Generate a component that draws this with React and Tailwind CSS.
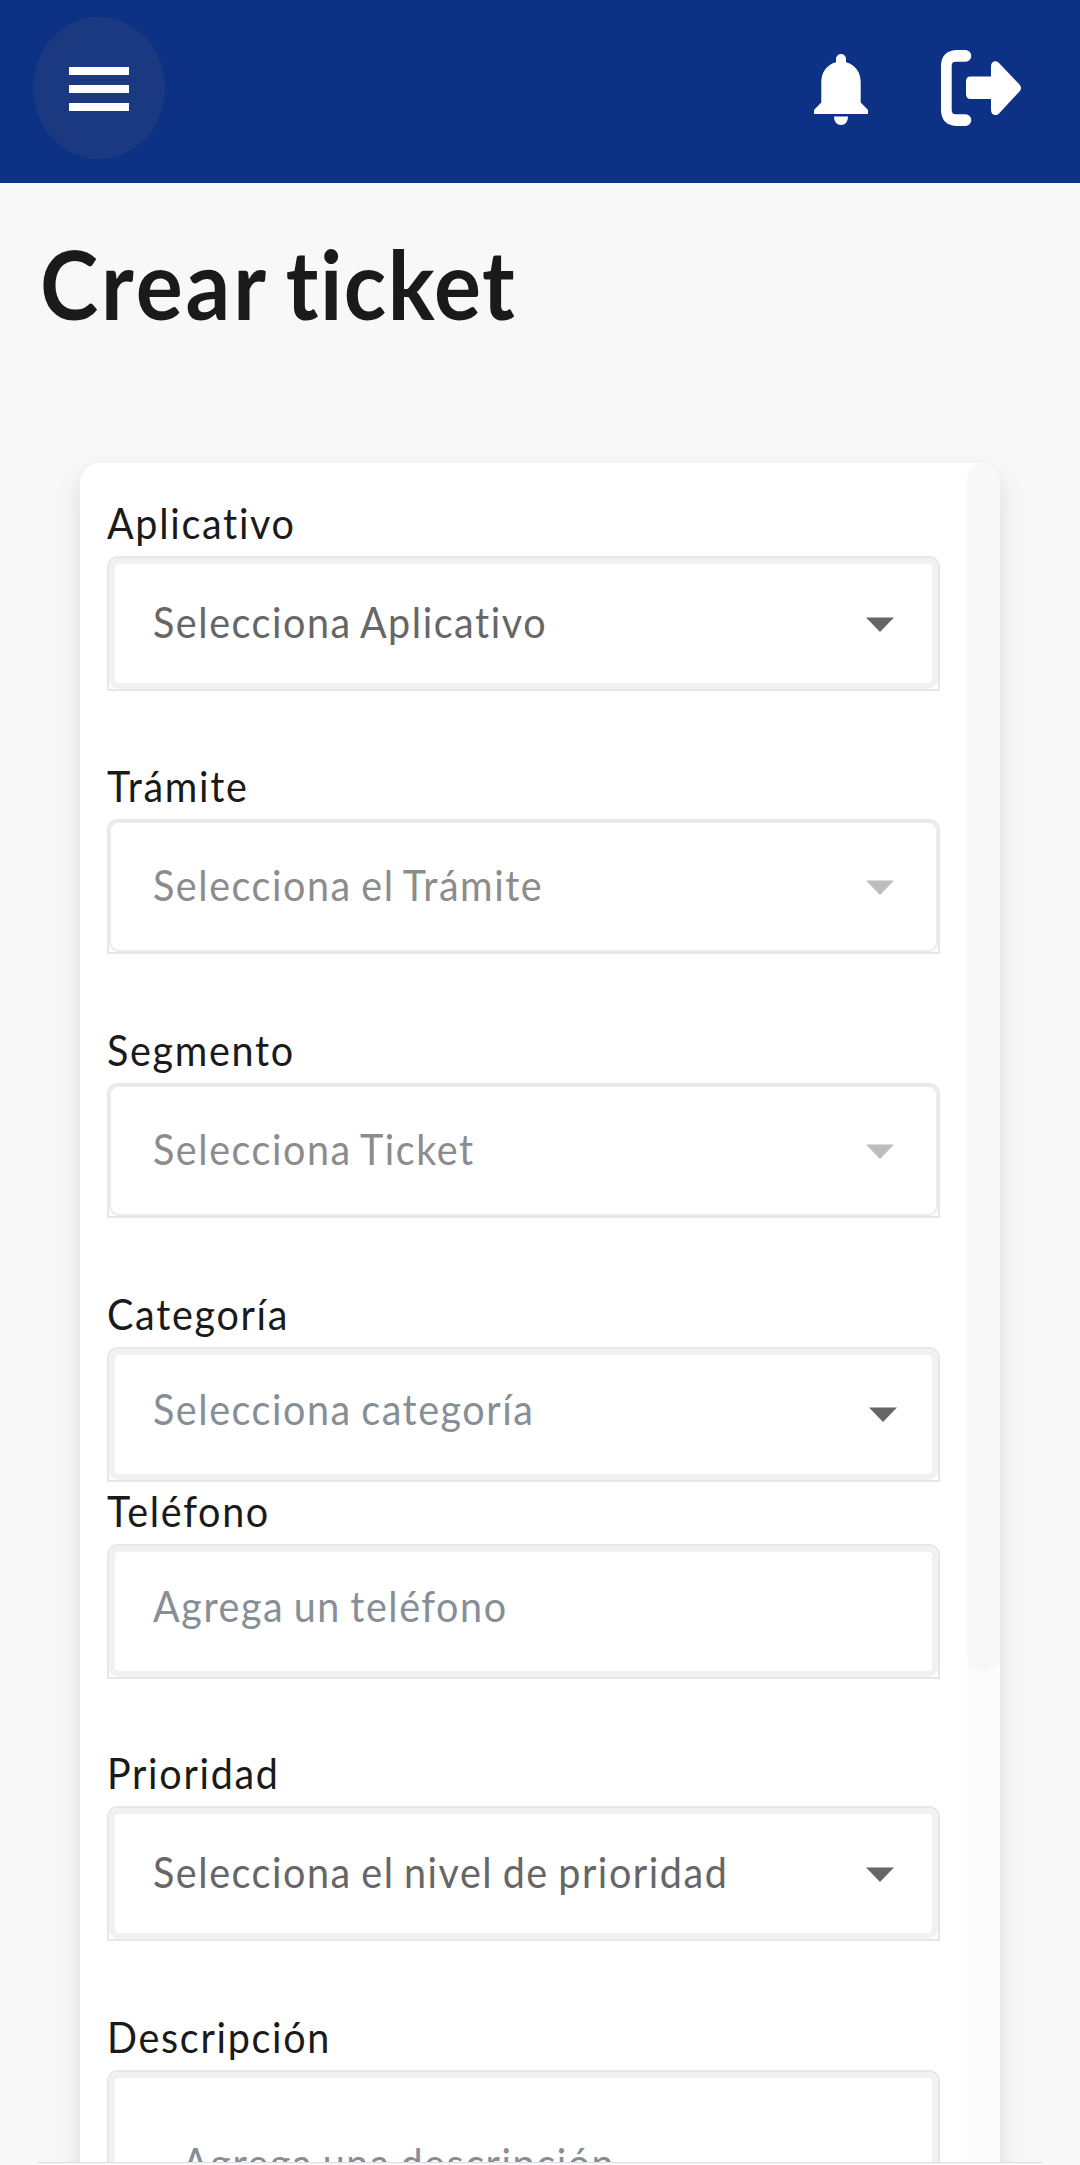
import React from 'react';

const fields = [
  { label: 'Aplicativo', value: 'Selecciona Aplicativo', kind: 'select', gap: '' },
  { label: 'Trámite', value: 'Selecciona el Trámite', kind: 'disabled', gap: 'mt-[61px]' },
  { label: 'Segmento', value: 'Selecciona Ticket', kind: 'disabled', gap: 'mt-[62px]' },
  { label: 'Categoría', value: 'Selecciona categoría', kind: 'combo', gap: 'mt-[62px]' },
  { label: 'Teléfono', value: 'Agrega un teléfono', kind: 'input', gap: '-mt-[5px]' },
  { label: 'Prioridad', value: 'Selecciona el nivel de prioridad', kind: 'select', gap: 'mt-[60px]' },
  { label: 'Descripción', value: 'Agrega una descripción', kind: 'textarea', gap: 'mt-[62px]' },
];

const styles = {
  select: {
    box: 'h-[131px] pl-[44px] pr-[44px] shadow-[inset_0_0_0_6px_#f1f1f1]',
    text: 'pb-[3px] text-[#666666]',
    arrow: 'text-[#666666] mt-[2px]',
  },
  disabled: {
    box: 'h-[131px] pl-[44px] pr-[44px] shadow-[inset_0_0_0_2px_#ebebeb]',
    text: 'pb-[3px] text-[#8c8c8c]',
    arrow: 'text-[#bdbdbd] mt-[2px]',
  },
  combo: {
    box: 'h-[131px] pl-[44px] pr-[41px] shadow-[inset_0_0_0_6px_#f1f1f1]',
    text: 'pb-[11px] text-[#868e96]',
    arrow: 'text-[#666666]',
  },
  input: {
    box: 'h-[131px] pl-[44px] shadow-[inset_0_0_0_6px_#f1f1f1]',
    text: 'pb-[11px] text-[#868e96]',
  },
  textarea: {
    box: 'h-[320px] pl-[73px] shadow-[inset_0_0_0_6px_#f1f1f1]',
    text: 'self-start mt-[64px] text-[#868e96]',
  },
};

function Field({ label, value, kind, gap }) {
  const s = styles[kind];
  return (
    <div className={gap}>
      <label className="flex h-[67px] origin-center scale-y-[1.09] items-center text-[39.5px] leading-[54px] tracking-[1.7px] text-[#1a1a1a]">
        {label}
      </label>
      <div className="rounded-t-[11px] border-2 border-[#e6e7e8]">
        <div className={`flex items-center justify-between rounded-[10px] ${s.box}`}>
          <span className={`whitespace-nowrap ${s.text}`}>
            <span className="block origin-center scale-y-[1.09] text-[39.5px] leading-[54px] tracking-[1.55px] [word-spacing:-2.2px]">
              {value}
            </span>
          </span>
          {s.arrow && (
            <svg className={`h-[15px] w-[28px] ${s.arrow}`} viewBox="0 0 28 15">
              <path d="M0 0.5H28L14 15Z" fill="currentColor" />
            </svg>
          )}
        </div>
      </div>
    </div>
  );
}

function Bell() {
  return (
    <svg className="h-[71px] w-[54px]" viewBox="0 0 54 71" fill="white">
      <path d="M22 8.2V5a5 5 0 0 1 10 0V8.2C41 10.5 46.7 18 46.7 28V48.5L54 56V60H0V56L7.3 48.5V28C7.3 18 13 10.5 22 8.2Z" />
      <path d="M20 62.5H34C34 67.5 31 71 27 71S20 67.5 20 62.5Z" />
    </svg>
  );
}

function Logout() {
  return (
    <svg className="h-[76px] w-[80px]" viewBox="0 0 80 76" fill="none">
      <path d="M15 0H24.5a5.8 5.9 0 0 1 0 11.8H14.5Q10.7 11.8 10.7 16V60Q10.7 64.2 14.5 64.2H24.5a5.8 5.9 0 0 1 0 11.8H15Q0 75 0 59.5V16.5Q0 1 15 0Z" fill="white" />
      <path d="M29.5 26.5H50V16C50 11.5 55 9.8 58 13L78.5 34.5Q81.5 38 78.5 41.5L58 63.5C55 66.5 50 65 50 60V49H29.5Q25 49 25 44V31.5Q25 26.5 29.5 26.5Z" fill="white" />
    </svg>
  );
}

export default function App() {
  return (
    <div className="flex h-[2165px] w-[1080px] flex-col overflow-hidden bg-[#f8f8f8] font-['Lato','Carlito',sans-serif]">
      <header className="flex h-[183px] shrink-0 items-start bg-[#0d3184]">
        <button className="ml-[33px] mt-[17px] flex h-[142px] w-[132px] flex-col items-center justify-center gap-[10px] rounded-[50%] bg-[#1a3980] pt-[1px]">
          <span className="h-[8px] w-[60px] bg-white" />
          <span className="h-[8px] w-[60px] bg-white" />
          <span className="h-[8px] w-[60px] bg-white" />
        </button>
        <div className="ml-auto mr-[59px] mt-[50px] flex items-start gap-[73px]">
          <div className="pt-[4px]"><Bell /></div>
          <Logout />
        </div>
      </header>

      <h1 className="ml-[40px] mt-[44px] h-[112px] origin-center scale-y-[1.08] whitespace-nowrap text-[88px] font-bold leading-[112px] text-[#1a1a1a] [word-spacing:-6px]">
        <span className="tracking-[3px]">Crear </span>
        <span className="tracking-[1.5px]">ticket</span>
      </h1>

      <div className="-mt-[36px] min-h-0 flex-1 overflow-hidden px-[80px] pt-[160px]">
        <main className="flex h-[1900px] rounded-[20px] bg-white shadow-[0_11px_24px_rgba(0,0,0,0.12)]">
          <div className="w-[887px] shrink-0 pl-[27px] pr-[27px] pt-[26px]">
            {fields.map((f) => (
              <Field key={f.label} {...f} />
            ))}
          </div>
          <div className="w-[33px] overflow-hidden rounded-r-[20px] bg-[#fcfcfc]">
            <div className="h-[60px] bg-white">
              <div className="h-[60px] rounded-t-[16px] bg-[#f8f8f8]" />
            </div>
            <div className="h-[1148px] rounded-b-[16px] bg-[#f8f8f8]" />
          </div>
        </main>
      </div>
      <footer className="mx-[37px] h-[3px] shrink-0 border-t border-[#dedede] bg-[#f8f8f8]" />
    </div>
  );
}
